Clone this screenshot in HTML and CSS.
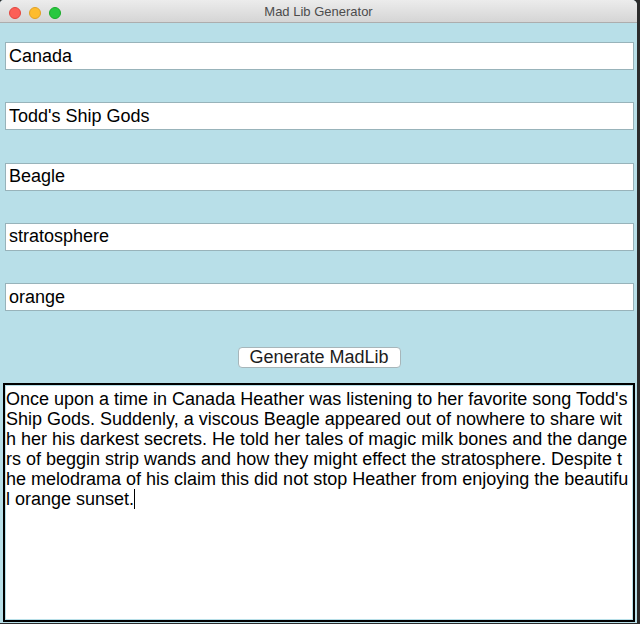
FILE: index.html
```html
<!DOCTYPE html>
<html lang="en">
<head>
<meta charset="utf-8">
<title>Mad Lib Generator</title>
<link rel="stylesheet" href="styles.css">
</head>
<body>
<div class="window">
  <div class="titlebar">
    <div class="lights">
      <span class="light red"></span>
      <span class="light yellow"></span>
      <span class="light green"></span>
    </div>
    <div class="title">Mad Lib Generator</div>
  </div>
  <div class="content">
    <div class="fields">
      <input class="field" type="text" value="Canada">
      <input class="field" type="text" value="Todd's Ship Gods">
      <input class="field" type="text" value="Beagle">
      <input class="field" type="text" value="stratosphere">
      <input class="field" type="text" value="orange">
    </div>
    <div class="actions">
      <button class="generate" type="button">Generate MadLib</button>
    </div>
    <div class="story" role="textbox" aria-multiline="true">Once upon a time in Canada Heather was listening to her favorite song Todd's Ship Gods. Suddenly, a viscous Beagle appeared out of nowhere to share with her his darkest secrets. He told her tales of magic milk bones and the dangers of beggin strip wands and how they might effect the stratosphere. Despite the melodrama of his claim this did not stop Heather from enjoying the beautiful orange sunset.<span class="caret"></span></div>
  </div>
</div>
</body>
</html>
```

FILE: styles.css
```css
html, body {
  margin: 0;
  padding: 0;
  background: #2b2b2b;
}

body {
  width: 640px;
  height: 624px;
  overflow: hidden;
  font-family: "Liberation Sans", Arial, sans-serif;
}

.window {
  width: 637px;
  height: 623px;
  display: flex;
  flex-direction: column;
  background: #b8dfe8;
  border-top-right-radius: 5px;
  border-top-left-radius: 4px;
  overflow: hidden;
}

.titlebar {
  position: relative;
  height: 22px;
  flex: 0 0 22px;
  background: linear-gradient(#ececec, #d5d5d5);
  border-bottom: 1px solid #adadad;
  display: flex;
  align-items: center;
  justify-content: center;
}

.lights {
  position: absolute;
  left: 9px;
  top: 7px;
  display: flex;
  gap: 8px;
}

.light {
  width: 12px;
  height: 12px;
  border-radius: 50%;
  box-sizing: border-box;
}

.red { background: #fc5f57; border: 1px solid #e2463f; }
.yellow { background: #fdbc2e; border: 1px solid #e1a124; }
.green { background: #28c840; border: 1px solid #1aab29; }

.title {
  font-size: 13px;
  color: #4c4c4c;
  line-height: 22px;
  padding-top: 1px;
}

.content {
  flex: 1;
  display: flex;
  flex-direction: column;
}

.fields {
  display: flex;
  flex-direction: column;
  gap: 32.25px;
  padding: 19px 3px 0 5px;
}

.field {
  box-sizing: border-box;
  height: 28px;
  width: 629px;
  margin: 0;
  border: 1px solid #98b3ba;
  background: #fff;
  padding: 0 2px 0 3px;
  font-family: "Liberation Sans", Arial, sans-serif;
  font-size: 18px;
  color: #000;
  outline: none;
}

.actions {
  display: flex;
  justify-content: center;
  padding: 36px 0 0 0;
  margin-left: 1px;
}

.generate {
  box-sizing: border-box;
  height: 21px;
  width: 163px;
  margin: 0;
  padding: 0;
  background: #fff;
  border: 1px solid #a7b6ba;
  border-radius: 4px;
  font-family: "Liberation Sans", Arial, sans-serif;
  font-size: 18px;
  line-height: 19px;
  color: #1c1c1c;
}

.story {
  box-sizing: border-box;
  margin: 15px 0 0 3px;
  width: 632px;
  height: 239px;
  border: 2px solid #000;
  box-shadow: inset 0 0 0 1px #b8dfe8;
  background: #fff;
  padding: 4px 2px 0 1px;
  font-size: 18px;
  line-height: 20px;
  color: #000;
  word-break: break-all;
  overflow: hidden;
}

.caret {
  display: inline-block;
  width: 1px;
  height: 20px;
  background: #000;
  vertical-align: top;
}
```
